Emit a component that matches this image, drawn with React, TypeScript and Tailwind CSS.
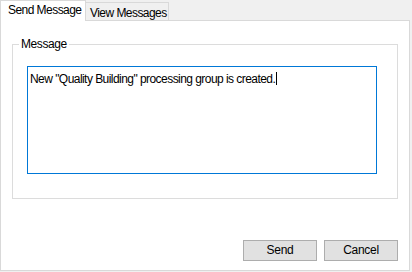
export default function App() {
  return (
    <div
      className="flex h-[272px] w-[412px] flex-col bg-[#f0f0f0] text-[12px] text-black"
      style={{ fontFamily: '"Liberation Sans", Arial, sans-serif' }}
    >
      {/* Tab strip */}
      <div className="flex h-[20px] items-end whitespace-nowrap tracking-[-0.55px]">
        <div className="relative z-10 -mb-px flex h-[21px] w-[86px] items-start border-x border-t border-[#d9d9d9] bg-white pl-[7px] pt-[2px] leading-[14px]">
          Send Message
        </div>
        <div className="flex h-[18px] w-[83px] items-start border-r border-t border-[#d9d9d9] bg-[#f0f0f0] pl-[4px] pt-[3px] leading-[14px]">
          View Messages
        </div>
      </div>

      {/* Tab page */}
      <div className="flex h-[251px] w-[410px] flex-col border border-[#d9d9d9] bg-white px-[11px] pt-[15px]">
        <fieldset className="h-[163px] border border-[#dcdcdc]">
          <legend className="ml-[6px] px-[2px] leading-[16px] tracking-[-0.4px]">Message</legend>
          <div className="ml-[14px] mt-[14px] h-[108px] w-[350px] border border-[#0078d7] px-[2px] pt-[3px] leading-[14px] tracking-[-0.55px]">
            New "Quality Building" processing group is created.
            <span className="ml-px inline-block h-[13px] w-px translate-y-[2px] bg-black align-baseline" />
          </div>
        </fieldset>

        <div className="mt-[41px] flex justify-end gap-[7px]">
          <button className="h-[21px] w-[74px] border border-[#adadad] bg-[#e1e1e1] leading-[15px] tracking-[-0.3px]">Send</button>
          <button className="h-[21px] w-[74px] border border-[#adadad] bg-[#e1e1e1] leading-[15px] tracking-[-0.3px]">Cancel</button>
        </div>
      </div>
    </div>
  );
}
